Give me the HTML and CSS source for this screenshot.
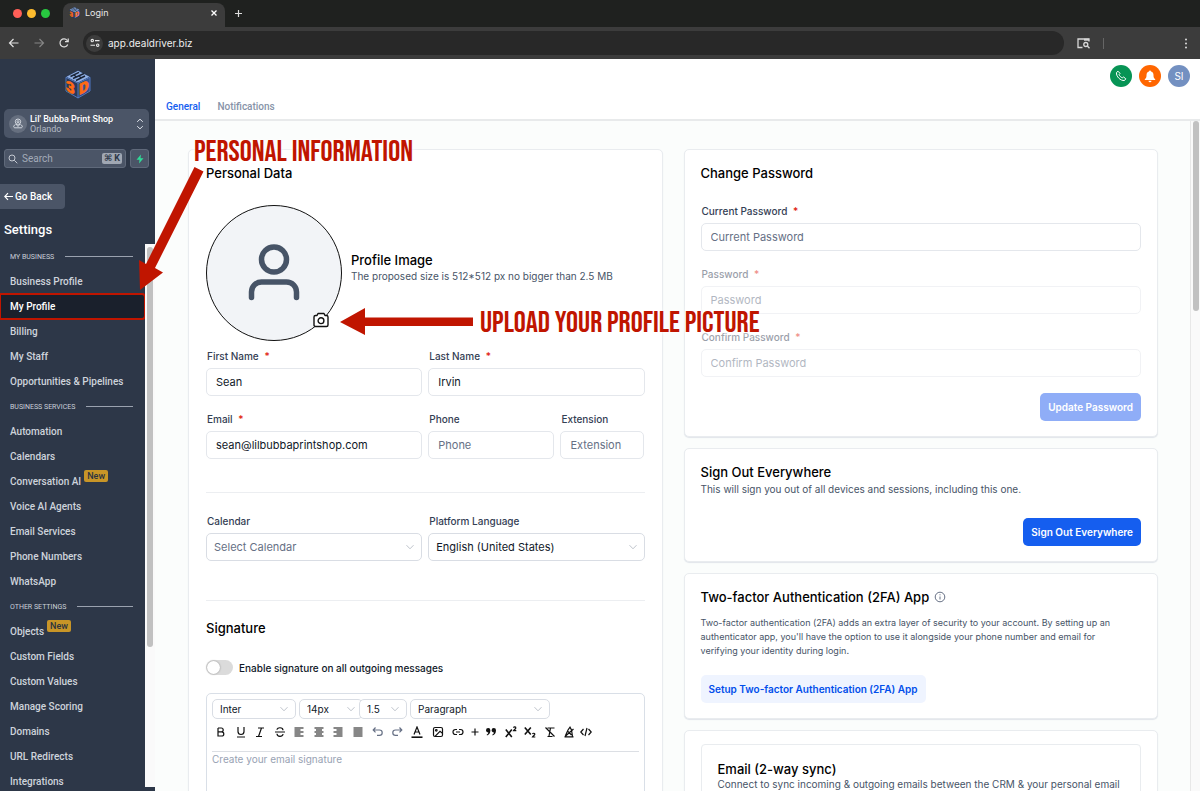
FILE: index.html
```html
<!DOCTYPE html>
<html lang="en">
  <head>
    <meta charset="UTF-8" />
    <meta name="viewport" content="width=device-width, initial-scale=1.0" />
    <title>Login</title>
    <link rel="stylesheet" href="styles.css" />
  </head>
  <body>
    <div class="window">
      <div class="tabstrip">
        <div class="lights">
          <span class="light red"></span>
          <span class="light yellow"></span>
          <span class="light green"></span>
        </div>
        <div class="tab">
          <svg class="tab-icon" viewBox="0 0 26 29">
            <path d="M13 0 25.500 6.500V21L13 28.500 .500 21V6.500z" fill="#2b3a56" />
            <path d="M13 .8 24.500 6.700 13 12.500 1.500 6.700z" fill="#8fb0e6" />
            <path d="M5.500 6.500 14 2.300M8 8.500l11-5M11 10.500l9-4.500" stroke="#1b2436" stroke-width="1.600" fill="none" />
            <path d="M13.600 13.800 24.700 8v12.300L13.600 27z" fill="#4a78cf" />
            <text x="1" y="20" transform="matrix(1 .5 0 1 0 0)" class="cube-letter">3</text>
            <text x="14" y="32" transform="matrix(1 -.5 0 1 0 0)" class="cube-letter">D</text>
          </svg>
          <span class="tab-title">Login</span>
          <button class="chrome-btn" aria-label="Close tab">
            <svg width="8" height="8" viewBox="0 0 8 8"><path d="M1.500 1.500l5 5M6.500 1.500l-5 5" stroke="#fff" stroke-width="1.300" /></svg>
          </button>
        </div>
        <button class="chrome-btn new-tab" aria-label="New tab">
          <svg width="9" height="9" viewBox="0 0 9 9"><path d="M4.500 1v7M1 4.500h7" stroke="#ddd" stroke-width="1.200" /></svg>
        </button>
      </div>
      <div class="toolbar">
        <button class="chrome-btn" aria-label="Back">
          <svg width="12" height="12" viewBox="0 0 12 12" fill="none" stroke="#e0e0e0" stroke-width="1.200"><path d="M10.500 6h-9M5.500 2l-4 4 4 4" /></svg>
        </button>
        <button class="chrome-btn" aria-label="Forward">
          <svg width="12" height="12" viewBox="0 0 12 12" fill="none" stroke="#858585" stroke-width="1.200"><path d="M1.500 6h9M6.500 2l4 4-4 4" /></svg>
        </button>
        <button class="chrome-btn" aria-label="Reload">
          <svg width="12" height="12" viewBox="0 0 12 12" fill="none" stroke="#e0e0e0" stroke-width="1.200"><path d="M9.700 7.500A4 4 0 1 1 9.200 3.500L10 4.500" /><path d="M10.200 1.500v3.200H7" /></svg>
        </button>
        <div class="address">
          <span class="site-info">
            <svg width="10" height="10" viewBox="0 0 10 10" fill="none" stroke="#e8e8e8" stroke-width="1.100"><circle cx="2.300" cy="2.600" r="1.200" /><path d="M5 2.600h4.500M.500 7.200H5" /><circle cx="7.700" cy="7.200" r="1.200" /></svg>
          </span>
          <input class="url" type="text" value="app.dealdriver.biz" aria-label="Address" />
        </div>
        <svg width="13" height="11" viewBox="0 0 13 11" fill="none" stroke="#d8d8d8" stroke-width="1.300"><path d="M5.500 9.500H1V1h11v2.500" /><path d="M7 1.700h5" stroke-width="2" /><circle cx="8.800" cy="6.500" r="2" /><path d="M10.300 8l2.200 2.300" /></svg>
        <span class="divider"></span>
        <button class="chrome-btn more" aria-label="Menu">
          <svg width="4" height="11" viewBox="0 0 4 11" fill="#ddd"><circle cx="2" cy="1.500" r="1" /><circle cx="2" cy="5.500" r="1" /><circle cx="2" cy="9.500" r="1" /></svg>
        </button>
      </div>

      <div class="app">
        <aside class="sidebar">
          <svg class="logo" viewBox="0 0 26 29">
            <path d="M13 0 25.500 6.500V21L13 28.500 .500 21V6.500z" fill="#2b3a56" />
            <path d="M13 .8 24.500 6.700 13 12.500 1.500 6.700z" fill="#8fb0e6" />
            <path d="M5.500 6.500 14 2.300M8 8.500l11-5M11 10.500l9-4.500M9 5l2.500 2M14 6l2.500 2" stroke="#1b2436" stroke-width="1.400" fill="none" />
            <path d="M13.600 13.800 24.700 8v12.300L13.600 27z" fill="#35528f" />
            <path d="M1 7.300 13 13.300 25 7.300M13 13.300V28M1 7.300V21l12 7 12-7V7.300" fill="none" stroke="#5a86d6" stroke-width=".8" />
            <text x="1" y="20" transform="matrix(1 .5 0 1 0 0)" class="cube-letter">3</text>
            <text x="14" y="32" transform="matrix(1 -.5 0 1 0 0)" class="cube-letter">D</text>
          </svg>
          <button class="account">
            <span class="account-icon">
              <svg width="10" height="11" viewBox="0 0 10 11" fill="none" stroke="#dfe3ea" stroke-width=".9"><circle cx="5" cy="3.700" r="2.700" /><circle cx="5" cy="3.700" r="1" /><path d="M3 6l2 2.500L7 6M2.500 6.500C.200 7.500.200 9.800 2 9.800h6c1.800 0 1.800-2.300-.5-3.300" /></svg>
            </span>
            <span class="account-text"><b>Lil' Bubba Print Shop</b><small>Orlando</small></span>
            <svg width="8" height="12" viewBox="0 0 8 12" fill="none" stroke="#dfe3ea"><path d="M1.200 3.800 4 1.200l2.800 2.600M1.200 8.200 4 10.800l2.800-2.600" /></svg>
          </button>
          <div class="search-row">
            <div class="search">
              <svg width="10" height="10" viewBox="0 0 10 10" fill="none" stroke="#c3c8d1"><circle cx="4" cy="4" r="3" /><path d="M6.200 6.200 9.300 9.300" /></svg>
              <input type="text" placeholder="Search" aria-label="Search" />
              <kbd>⌘ K</kbd>
            </div>
            <button class="bolt" aria-label="Quick actions">
              <svg width="8" height="10" viewBox="0 0 8 10" fill="#2fdc98"><path d="M5 .500.500 5.800h3L3 9.500l4.500-5.300h-3z" /></svg>
            </button>
          </div>
          <button class="back">
            <svg width="9" height="9" viewBox="0 0 9 9" fill="none" stroke="#fff" stroke-width="1.200"><path d="M9 4.500H1M4 1.200.800 4.500 4 7.800" /></svg>
            Go Back
          </button>
          <h2 class="side-title">Settings</h2>
          <div class="nav-wrap">
            <nav class="nav">
              <h3 class="group">MY BUSINESS</h3>
              <a href="#">Business Profile</a>
              <a href="#" class="active">My Profile</a>
              <a href="#">Billing</a>
              <a href="#">My Staff</a>
              <a href="#">Opportunities &amp; Pipelines</a>
              <h3 class="group">BUSINESS SERVICES</h3>
              <a href="#">Automation</a>
              <a href="#">Calendars</a>
              <a href="#">Conversation AI <span class="new">New</span></a>
              <a href="#">Voice AI Agents</a>
              <a href="#">Email Services</a>
              <a href="#">Phone Numbers</a>
              <a href="#">WhatsApp</a>
              <h3 class="group">OTHER SETTINGS</h3>
              <a href="#">Objects <span class="new">New</span></a>
              <a href="#">Custom Fields</a>
              <a href="#">Custom Values</a>
              <a href="#">Manage Scoring</a>
              <a href="#">Domains</a>
              <a href="#">URL Redirects</a>
              <a href="#">Integrations</a>
            </nav>
            <div class="scrollbar"><div class="thumb"></div></div>
          </div>
        </aside>

        <main class="main">
          <header class="topbar">
            <div class="actions">
              <button class="round phone" aria-label="Call">
                <svg width="12" height="12" viewBox="0 0 12 12" fill="none" stroke="#fff" stroke-linejoin="round"><path d="M1.500 2.500 3 1.200l2 2.200-.9 1.200c.4 1.300 1.800 2.700 3.200 3.200l1.300-.8 2.200 1.800-1.300 1.700C5.500 11 1 6.500 1.500 2.500z" /></svg>
              </button>
              <button class="round bell" aria-label="Notifications">
                <svg width="12" height="13" viewBox="0 0 12 13" fill="#fff"><path d="M6 .500a1 1 0 0 1 1 1C9 2 9.500 3.500 9.500 5.500c0 2 .5 2.700 1.700 3.700V10H.800v-.8C2 8.200 2.500 7.500 2.500 5.500 2.500 3.500 3 2 5 1.500a1 1 0 0 1 1-1zM4.500 10.700h3a1.500 1.500 0 0 1-3 0z" /></svg>
              </button>
              <button class="round user">SI</button>
            </div>
            <div class="tabs">
              <a href="#" class="current">General</a>
              <a href="#">Notifications</a>
            </div>
          </header>

          <div class="body">
            <div class="content">
              <form class="card personal">
                <h2>Personal Data</h2>
                <div class="profile">
                  <div class="avatar">
                    <svg width="52" height="58" viewBox="0 0 52 58" fill="none" stroke="#475467" stroke-width="5.500" stroke-linecap="round"><circle cx="26" cy="15.500" r="12.500" /><path d="M3.500 53.500V48a10 10 0 0 1 10-10h25a10 10 0 0 1 10 10v5.500" /></svg>
                    <button type="button" class="camera" aria-label="Upload image">
                      <svg width="16" height="16" viewBox="0 0 16 16" fill="#fff" stroke="#111" stroke-width="1.400" stroke-linejoin="round"><path d="M1 5Q1 3.500 2.500 3.500H4L5 1.500h6l1 2h1.500Q15 3.500 15 5v8q0 1.500-1.500 1.500h-11Q1 14.500 1 13z" /><circle cx="8" cy="8.700" r="2.900" /></svg>
                    </button>
                  </div>
                  <div>
                    <h2>Profile Image</h2>
                    <p>The proposed size is 512*512 px no bigger than 2.5 MB</p>
                  </div>
                </div>
                <div class="fields">
                  <div class="field">
                    <label for="first">First Name <i>*</i></label>
                    <input type="text" id="first" value="Sean" />
                  </div>
                  <div class="field">
                    <label for="last">Last Name <i>*</i></label>
                    <input type="text" id="last" value="Irvin" />
                  </div>
                  <div class="field">
                    <label for="email">Email <i>*</i></label>
                    <input type="email" id="email" value="sean@lilbubbaprintshop.com" />
                  </div>
                  <div class="phone-row">
                    <div class="field">
                      <label for="phone">Phone</label>
                      <input type="tel" id="phone" placeholder="Phone" />
                    </div>
                    <div class="field">
                      <label for="ext">Extension</label>
                      <input type="text" id="ext" placeholder="Extension" />
                    </div>
                  </div>
                </div>
                <hr />
                <div class="fields">
                  <div class="field">
                    <label for="calendar">Calendar</label>
                    <div class="select empty">
                      <select id="calendar"><option>Select Calendar</option></select>
                      <svg viewBox="0 0 10 10"><path d="M1.500 3.200 5 6.800l3.500-3.600" /></svg>
                    </div>
                  </div>
                  <div class="field">
                    <label for="language">Platform Language</label>
                    <div class="select">
                      <select id="language"><option>English (United States)</option></select>
                      <svg viewBox="0 0 10 10"><path d="M1.500 3.200 5 6.800l3.500-3.600" /></svg>
                    </div>
                  </div>
                </div>
                <hr class="low" />
                <h2>Signature</h2>
                <div class="toggle">
                  <input type="checkbox" id="sig" role="switch" />
                  <label for="sig">Enable signature on all outgoing messages</label>
                </div>
                <div class="editor">
                  <div class="pickers">
                    <div class="select font"><select aria-label="Font"><option>Inter</option></select><svg viewBox="0 0 10 10"><path d="M1.500 3.200 5 6.800l3.500-3.600" /></svg></div>
                    <div class="select size"><select aria-label="Font size"><option>14px</option></select><svg viewBox="0 0 10 10"><path d="M1.500 3.200 5 6.800l3.500-3.600" /></svg></div>
                    <div class="select line"><select aria-label="Line height"><option>1.5</option></select><svg viewBox="0 0 10 10"><path d="M1.500 3.200 5 6.800l3.500-3.600" /></svg></div>
                    <div class="select block"><select aria-label="Block style"><option>Paragraph</option></select><svg viewBox="0 0 10 10"><path d="M1.500 3.200 5 6.800l3.500-3.600" /></svg></div>
                  </div>
                  <div class="tools">
                    <button type="button" aria-label="Bold"><svg viewBox="0 0 12 12"><path d="M3 2v8h3.700a2.100 2.100 0 0 0 0-4.200H3M3 2h3.300a1.900 1.900 0 0 1 0 3.800" /></svg></button>
                    <button type="button" aria-label="Underline"><svg viewBox="0 0 12 12"><path d="M3 1v4.500a3 3 0 0 0 6 0V1M2 11h8" /></svg></button>
                    <button type="button" aria-label="Italic"><svg viewBox="0 0 12 12"><path d="M4 2h6M2 10.500h6M7.500 2l-3 8.500" /></svg></button>
                    <button type="button" aria-label="Strikethrough"><svg viewBox="0 0 12 12"><path d="M9 4.200C9 1 3 1 3 3.800M1 6h10M3 7.800C3 11.200 9 11.200 9 8" /></svg></button>
                    <button type="button" aria-label="Align left"><svg viewBox="0 0 12 12"><path d="M1.500 2h9M1.500 4h6M1.500 6h9M1.500 8h6M1.500 10h9" /></svg></button>
                    <button type="button" aria-label="Align center"><svg viewBox="0 0 12 12"><path d="M1.500 2h9M3 4h6M1.500 6h9M3 8h6M1.500 10h9" /></svg></button>
                    <button type="button" aria-label="Align right"><svg viewBox="0 0 12 12"><path d="M1.500 2h9M4.500 4h6M1.500 6h9M4.500 8h6M1.500 10h9" /></svg></button>
                    <button type="button" aria-label="Justify"><svg viewBox="0 0 12 12"><path d="M1.500 2h9M1.500 4h9M1.500 6h9M1.500 8h9M1.500 10h9" /></svg></button>
                    <button type="button" class="soft" aria-label="Undo"><svg viewBox="0 0 12 12"><path d="M3.500 1.500 1.200 4l2.300 2.300M1.500 4h6a2.700 2.700 0 0 1 0 5.400H5" /></svg></button>
                    <button type="button" class="soft" aria-label="Redo"><svg viewBox="0 0 12 12"><path d="M8.500 1.500 10.800 4 8.500 6.300M10.500 4h-6a2.700 2.700 0 0 0 0 5.400H7" /></svg></button>
                    <button type="button" aria-label="Text color"><svg viewBox="0 0 12 12"><path d="M3 8.500 6 1l3 7.500M4 6h4" /><path d="M.500 11.200h11" stroke-width="1.600" /></svg></button>
                    <button type="button" class="wide" aria-label="Image"><svg viewBox="0 0 12 12"><rect x="1.500" y="1.500" width="9" height="9" rx="1.500" /><circle cx="4.300" cy="4.300" r=".8" /><path d="M3 10.300l5-5 2.500 2" /></svg></button>
                    <button type="button" aria-label="Link"><svg viewBox="0 0 12 12"><path d="M5 3.500H3.500a2.500 2.500 0 0 0 0 5H5M7 3.500h1.500a2.500 2.500 0 0 1 0 5H7M4 6h4" /></svg></button>
                    <button type="button" class="slim" aria-label="Insert"><svg viewBox="0 0 12 12"><path d="M6 2.500v7M2.500 6h7" /></svg></button>
                    <button type="button" class="slim" aria-label="Quote"><svg viewBox="0 0 12 12"><path class="solid" d="M1 4.200a2.200 2.200 0 1 1 4.400 0C5.400 7 4 8.800 2 9.500l-.3-1C2.700 8 3.200 7.300 3.300 6.400 2 6.400 1 5.500 1 4.200zM6.600 4.200a2.200 2.200 0 1 1 4.400 0c0 2.800-1.400 4.600-3.400 5.300l-.3-1c1-.5 1.500-1.200 1.600-2.100-1.300 0-2.300-.9-2.300-2.200z" /></svg></button>
                    <button type="button" aria-label="Superscript"><svg viewBox="0 0 12 12"><path d="M.800 3.500l6 7.500M6.800 3.500l-6 7.500" stroke-width="1.600" /><path d="M8.500 1.700c.5-1.200 2.500-.9 2.300.4C10.700 3 9 3.700 8.500 4.700h2.800" /></svg></button>
                    <button type="button" aria-label="Subscript"><svg viewBox="0 0 12 12"><path d="M.800 1.500l6 7M6.800 1.500l-6 7" stroke-width="1.600" /><path d="M8.500 8c.5-1.200 2.500-.9 2.300.4-.1.900-1.800 1.600-2.300 2.600h2.800" /></svg></button>
                    <button type="button" aria-label="Clear format"><svg viewBox="0 0 12 12"><path d="M3.500 2h7M6.500 2 5 10M3.500 10.500h5M1.500 1.500l9 9" /></svg></button>
                    <button type="button" aria-label="Highlight"><svg viewBox="0 0 12 12"><path d="M1.500 10.800h9M2.500 9.500 5 4l2-2.800L8.500 4l1 6.500M10.500 3 2 10.500M5 5.500 8.500 9" /></svg></button>
                    <button type="button" class="slim" aria-label="Source"><svg viewBox="0 0 12 12"><path d="M3.500 3 .800 6l2.700 3M8.500 3l2.700 3-2.700 3M7 2 5 10" /></svg></button>
                  </div>
                  <textarea placeholder="Create your email signature" aria-label="Signature"></textarea>
                </div>
              </form>

              <div class="column">
                <form class="card">
                  <h2>Change Password</h2>
                  <div class="stack">
                    <div class="field">
                      <label for="current">Current Password <i>*</i></label>
                      <input type="password" id="current" placeholder="Current Password" />
                    </div>
                    <div class="field off">
                      <label for="password">Password <i>*</i></label>
                      <input type="password" id="password" placeholder="Password" disabled />
                    </div>
                    <div class="field off">
                      <label for="confirm">Confirm Password <i>*</i></label>
                      <input type="password" id="confirm" placeholder="Confirm Password" disabled />
                    </div>
                    <button type="button" class="btn" disabled>Update Password</button>
                  </div>
                </form>
                <section class="card signout">
                  <h2>Sign Out Everywhere</h2>
                  <p>This will sign you out of all devices and sessions, including this one.</p>
                  <button class="btn">Sign Out Everywhere</button>
                </section>
                <section class="card twofa">
                  <h2>
                    Two-factor Authentication (2FA) App
                    <svg width="12" height="12" viewBox="0 0 12 12" fill="none" stroke="#667085"><circle cx="6" cy="6" r="4.800" /><path d="M6 5.500v3M6 3.300v1" /></svg>
                  </h2>
                  <p>Two-factor authentication (2FA) adds an extra layer of security to your account. By setting up an authenticator app, you'll have the option to use it alongside your phone number and email for verifying your identity during login.</p>
                  <button class="btn light-btn">Setup Two-factor Authentication (2FA) App</button>
                </section>
                <section class="card sync">
                  <div class="inner">
                    <h2>Email (2-way sync)</h2>
                    <p>Connect to sync incoming &amp; outgoing emails between the CRM &amp; your personal email</p>
                  </div>
                </section>
              </div>
            </div>
            <div class="scrollbar page-scroll"><div class="thumb"></div></div>
          </div>
        </main>
      </div>
    </div>

    <!-- callouts drawn over the page -->
    <svg class="arrows" aria-hidden="true">
      <path d="M194.500 167 203.500 171.500 155 268 163 272.500 140 290 139 260 146 264z" />
      <path d="M340 322 365 308V317.500H473V326H365V335z" />
    </svg>
    <strong class="callout info">PERSONAL INFORMATION</strong>
    <strong class="callout upload">UPLOAD YOUR PROFILE PICTURE</strong>
  </body>
</html>
```
FILE: styles.css
```css
* {
  box-sizing: border-box;
}
body {
  margin: 0;
  font-family: Inter, sans-serif;
  font-size: 10px;
  line-height: 14px;
  color: #101828;
}
button,
input,
select,
textarea {
  font: inherit;
  color: inherit;
  margin: 0;
}
button {
  border: none;
  background: none;
  padding: 0;
}
a {
  text-decoration: none;
}
h2,
h3,
p {
  margin: 0;
}
svg {
  flex: none;
}
.cube-letter {
  font: 900 15px Roboto, sans-serif;
  fill: #ff6a13;
  stroke: #ff6a13;
  stroke-width: 0.6;
}
.window {
  display: flex;
  flex-direction: column;
  height: 100vh;
  overflow: hidden;
}

/* browser bars */
.tabstrip {
  display: flex;
  align-items: flex-end;
  height: 27px;
  background: #1f211f;
}
.lights {
  display: flex;
  align-items: center;
  gap: 5px;
  height: 27px;
  padding: 0 13px;
}
.light {
  width: 9px;
  height: 9px;
  border-radius: 50%;
}
.red {
  background: #ff5f57;
}
.yellow {
  background: #febc2e;
}
.green {
  background: #28c840;
}
.tab {
  display: flex;
  align-items: center;
  width: 162px;
  height: 24px;
  padding: 0 7px 4px 6px;
  background: #3c3c3c;
  border-radius: 8px 8px 0 0;
  color: #e8e8e8;
  font-size: 9px;
}
.tab-icon {
  width: 11px;
  height: 12px;
}
.tab-title {
  flex: 1;
  padding-left: 5px;
}
.chrome-btn {
  display: flex;
  align-items: center;
}
.new-tab {
  height: 27px;
  margin-left: 9px;
}
.toolbar {
  display: flex;
  align-items: center;
  gap: 13px;
  height: 32px;
  padding: 0 12px 0 8px;
  background: #3c3c3c;
}
.address {
  display: flex;
  flex: 1;
  align-items: center;
  height: 24px;
  padding: 0 3px;
  background: #282828;
  border-radius: 12px;
}
.site-info {
  display: flex;
  align-items: center;
  justify-content: center;
  width: 17px;
  height: 17px;
  border-radius: 50%;
  background: #3c3c3c;
}
.url {
  flex: 1;
  border: none;
  background: none;
  padding: 0 5px;
  color: #eee;
}
.divider {
  width: 1px;
  height: 11px;
  background: #666;
}
.more {
  margin-left: 67px;
}
.app {
  display: flex;
  flex: 1;
  min-height: 0;
}

/* sidebar */
.sidebar {
  display: flex;
  flex-direction: column;
  width: 155px;
  padding: 11px 0 4px;
  background: #2d3748;
  color: #fff;
  font-family: Roboto, sans-serif;
}
.logo {
  width: 26px;
  height: 29px;
  margin: 0 auto;
}
.account {
  display: flex;
  align-items: center;
  height: 29px;
  margin: 10px 6px 0 4px;
  padding: 0 5px;
  background: #4b5567;
  border-radius: 5px;
  text-align: left;
}
.account-icon {
  display: flex;
  align-items: center;
  justify-content: center;
  width: 18px;
  height: 18px;
  border-radius: 50%;
  background: #666f7f;
}
.account-text {
  flex: 1;
  padding-left: 3px;
  font-size: 9px;
  line-height: 10px;
}
.account-text b,
.account-text small {
  display: block;
  font-size: inherit;
  font-weight: 500;
}
.account-text small {
  font-weight: 400;
  color: #b4bac5;
}
.search-row {
  display: flex;
  gap: 4px;
  margin: 11px 6px 0 4px;
}
.search,
.bolt {
  display: flex;
  align-items: center;
  height: 19px;
  border: 1px solid #5f697a;
  border-radius: 3px;
  background: #4b5567;
}
.search {
  flex: 1;
  padding: 0 3px;
}
.search input {
  flex: 1;
  width: 0;
  padding: 0 4px;
  border: none;
  background: none;
}
.search input::placeholder {
  color: #a3abb8;
}
.search kbd {
  padding: 0 2px;
  border-radius: 2px;
  background: #a0a7b3;
  color: #2d3748;
  font: 700 9px/11px Roboto, "DejaVu Sans", sans-serif;
}
.bolt {
  justify-content: center;
  width: 19px;
}
.back {
  display: flex;
  align-items: center;
  gap: 2px;
  align-self: flex-start;
  width: 65px;
  height: 25px;
  margin-top: 16px;
  padding-left: 4px;
  border-radius: 0 4px 4px 0;
  background: #4b5567;
  font-weight: 500;
}
.side-title {
  margin: 12px 4px 6px;
  font-size: 13px;
  font-weight: 500;
  line-height: 17px;
}
.nav-wrap {
  display: flex;
  flex: 1;
  min-height: 0;
}
.nav {
  flex: 1;
  overflow: hidden;
}
.nav a {
  display: flex;
  align-items: center;
  height: 25px;
  padding-left: 10px;
  font-weight: 500;
  color: #ced3db;
}
.nav .active {
  border-radius: 0 3px 3px 0;
  outline: 2px solid #c01500;
  outline-offset: -1px;
  background: #1a202c;
  color: #fff;
}
.group {
  display: flex;
  align-items: center;
  gap: 11px;
  height: 25px;
  padding: 0 12px 0 10px;
  font-size: 7px;
  font-weight: 400;
  color: #cbd0d9;
}
.group::after {
  content: "";
  flex: 1;
  height: 1px;
  background: #9aa2af;
}
.new {
  align-self: flex-start;
  margin: 1px 0 0 3px;
  padding: 0 3px;
  border-radius: 2px;
  background: #c89527;
  color: #2b3340;
  font-size: 9px;
  line-height: 12px;
}
.scrollbar {
  width: 10px;
  padding: 3px 2px 0;
  background: #fafafa;
}
.thumb {
  height: 74%;
  border-radius: 3px;
  background: #c1c1c1;
}

/* main area */
.main {
  display: flex;
  flex: 1;
  flex-direction: column;
  min-width: 0;
}
.topbar {
  height: 62px;
  padding: 6px 10px 0 11px;
  border-bottom: 2px solid #e8eaeb;
  background: #fff;
}
.actions {
  display: flex;
  justify-content: flex-end;
  gap: 7px;
}
.round {
  display: flex;
  align-items: center;
  justify-content: center;
  width: 22px;
  height: 22px;
  border-radius: 50%;
  color: #fff;
}
.phone {
  background: #079455;
}
.bell {
  background: #ff6600;
}
.user {
  background: #7390c1;
}
.tabs {
  display: flex;
  gap: 17px;
  margin-top: 13px;
  font-family: Roboto, sans-serif;
  font-weight: 500;
}
.tabs a {
  color: #8793a8;
}
.tabs .current {
  color: #155eef;
}
.body {
  display: flex;
  flex: 1;
  min-height: 0;
  background: #fbfdfc;
}
.content {
  display: grid;
  flex: 1;
  grid-template-columns: 1fr 1fr;
  gap: 21px;
  padding: 28px 32px 0 33px;
  overflow: hidden;
}
.page-scroll {
  width: 10px;
  border-left: 1px solid #e8e8e8;
  padding: 0 1px 0 2px;
}
.page-scroll .thumb {
  height: 190px;
}
.column {
  display: flex;
  flex-direction: column;
  gap: 11px;
}
.card {
  padding: 15px 16px;
  border: 1px solid #e9ecef;
  border-radius: 5px;
  background: #fff;
  box-shadow: 0 1px 1px #e1e5ea;
}
.personal {
  padding: 15px 17px;
}
.card h2 {
  font-size: 13px;
  font-weight: 500;
  line-height: 16px;
  color: #000;
}
.card p {
  color: #475467;
}
.profile {
  display: flex;
  align-items: center;
  gap: 9px;
  margin: 24px 0 8px;
}
.profile h2 {
  margin-top: -12px;
}
.profile p {
  margin-top: 1px;
}
.avatar {
  position: relative;
  display: flex;
  align-items: center;
  justify-content: center;
  width: 136px;
  height: 136px;
  border: 1px solid #111;
  border-radius: 50%;
  background: #f2f4f7;
}
.camera {
  position: absolute;
  right: 12px;
  bottom: 12px;
  width: 16px;
  height: 16px;
}
.camera svg {
  display: block;
}
.fields {
  display: grid;
  grid-template-columns: 1fr 1fr;
  gap: 16px 6px;
}
.phone-row {
  display: grid;
  grid-template-columns: 3fr 2fr;
  gap: 6px;
}
.field label {
  display: block;
  margin: 0 0 5px 1px;
  font-weight: 500;
  color: #344054;
}
.field i {
  margin-left: 3px;
  font-style: normal;
  color: #e01507;
}
.field input {
  display: block;
  width: 100%;
  height: 28px;
  padding: 0 9px;
  border: 1px solid #e4e7ec;
  border-radius: 5px;
  background: #fff;
  font-size: 11px;
}
.field input::placeholder {
  color: #667085;
}
.off {
  opacity: 0.5;
}
.select {
  position: relative;
}
.select select {
  width: 100%;
  height: 28px;
  padding: 0 7px;
  border: 1px solid #d9dde4;
  border-radius: 5px;
  background: #fff;
  appearance: none;
}
.empty select {
  color: #667085;
}
.select svg {
  position: absolute;
  right: 7px;
  top: 50%;
  width: 10px;
  height: 10px;
  margin-top: -5px;
  fill: none;
  stroke: #bfc4cc;
}
.field .select select {
  font-size: 11px;
}
hr {
  margin: 33px 0 21px;
  border: none;
  border-top: 1px solid #eceef1;
}
.low {
  margin: 39px 0 19px;
}
.toggle {
  display: flex;
  align-items: center;
  gap: 6px;
  margin: 24px 0 18px;
  font-weight: 500;
}
.toggle input {
  appearance: none;
  width: 27px;
  height: 15px;
  padding: 1px;
  border-radius: 8px;
  background: #dbdbdb;
}
.toggle input::before {
  content: "";
  display: block;
  width: 13px;
  height: 13px;
  border-radius: 50%;
  background: #fff;
  box-shadow: 0 0 2px #888;
}
.editor {
  height: 160px;
  padding: 5px;
  border: 1px solid #d9dfe7;
  border-radius: 5px;
}
.pickers {
  display: flex;
  gap: 3px;
}
.pickers select {
  height: 20px;
}
.font {
  width: 84px;
}
.size {
  width: 64px;
}
.line {
  width: 48px;
  margin-left: -7px;
}
.block {
  width: 140px;
}
.tools {
  display: flex;
  justify-content: space-between;
  max-width: 380px;
  margin: 7px 0 13px;
  padding-left: 3px;
}
.tools button {
  display: flex;
}
.tools svg {
  width: 12px;
  height: 12px;
  fill: none;
  stroke: #111;
  stroke-width: 1.2;
}
.tools .solid {
  fill: #111;
  stroke: none;
}
.tools .soft svg {
  stroke: #667085;
}
.tools .wide {
  margin-left: 2px;
}
.tools .slim {
  margin-left: -3px;
}
.editor textarea {
  display: block;
  width: 100%;
  height: 60px;
  padding: 0;
  border: none;
  border-top: 1px solid #dcdfe4;
  resize: none;
}
.editor textarea::placeholder {
  color: #98a2b3;
}
.stack {
  display: flex;
  flex-direction: column;
  gap: 16px;
  margin-top: 23px;
}
.btn {
  display: block;
  height: 28px;
  margin-left: auto;
  padding: 0 8px;
  border-radius: 5px;
  background: #155eef;
  color: #fff;
  font-weight: 600;
}
.btn:disabled {
  background: #8fadf7;
}
.signout p {
  margin: 2px 0 22px;
}
.twofa p {
  margin: 11px 0 17px;
  padding-right: 16px;
  font-size: 9px;
}
.twofa h2 {
  display: flex;
  align-items: center;
  gap: 5px;
}
.twofa .light-btn {
  margin-left: 0;
  background: #eff4ff;
  color: #004eeb;
}
.sync {
  height: 200px;
  padding-top: 13px;
}
.inner {
  height: 160px;
  padding: 16px;
  border: 1px solid #e9ecef;
  border-radius: 4px;
}

/* callouts */
.arrows {
  position: absolute;
  left: 0;
  top: 0;
  width: 480px;
  height: 340px;
  fill: #c01500;
  pointer-events: none;
}
.callout {
  position: absolute;
  color: #c01500;
  font: 400 30px/32px "Bebas Neue", "Liberation Sans Narrow", sans-serif;
  white-space: nowrap;
  text-shadow: 0 0 4px #fff, 0 0 8px #fff;
}
.info {
  left: 194px;
  top: 136px;
}
.upload {
  left: 480px;
  top: 307px;
}
```
